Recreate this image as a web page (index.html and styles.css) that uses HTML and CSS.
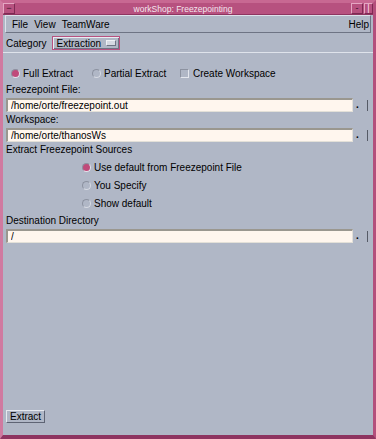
FILE: index.html
```html
<!DOCTYPE html>
<html lang="en">
<head>
  <meta charset="UTF-8">
  <title>workShop: Freezepointing</title>
  <link rel="stylesheet" href="styles.css">
</head>
<body>

  <div class="window">
    <div class="titlebar">
      <span class="wm-btn wm-menu">&minus;</span>
      <span class="title">workShop: Freezepointing</span>
      <span class="wm-btn wm-min">-</span>
      <span class="wm-btn wm-max">|</span>
    </div>

    <div class="client">
      <div class="menubar">
        <span>File</span>
        <span>View</span>
        <span>TeamWare</span>
        <span class="help">Help</span>
      </div>

      <div class="category-row">
        <span>Category</span>
        <span class="option-btn">Extraction <i class="option-mark"></i></span>
      </div>

      <div class="panel">
        <div class="mode-row">
          <label class="radio"><i class="dot on"></i>Full Extract</label>
          <label class="radio"><i class="dot"></i>Partial Extract</label>
          <label class="check"><i class="box"></i>Create Workspace</label>
        </div>

        <div class="field-label">Freezepoint File:</div>
        <div class="field">
          <input class="text-input" type="text" value="/home/orte/freezepoint.out">
          <span class="dot-mark">.</span>
          <span class="bar-mark"></span>
        </div>

        <div class="field-label">Workspace:</div>
        <div class="field">
          <input class="text-input" type="text" value="/home/orte/thanosWs">
          <span class="dot-mark">.</span>
          <span class="bar-mark"></span>
        </div>

        <div class="field-label">Extract Freezepoint Sources</div>
        <div class="source-list">
          <label class="radio"><i class="dot on"></i>Use default from Freezepoint File</label>
          <label class="radio"><i class="dot"></i>You Specify</label>
          <label class="radio"><i class="dot"></i>Show default</label>
        </div>

        <div class="field-label">Destination Directory</div>
        <div class="field">
          <input class="text-input" type="text" value="/">
          <span class="dot-mark">.</span>
          <span class="bar-mark"></span>
        </div>

        <div class="footer">
          <button class="push-btn">Extract</button>
        </div>
      </div>
    </div>
  </div>

</body>
</html>
```

FILE: styles.css
```css
body {
  margin: 0;
  font-family: "Liberation Sans", Arial, sans-serif;
  font-size: 10px;
  color: #000;
  background: #b0b7c6;
}

.window {
  width: 376px;
  height: 439px;
  box-sizing: border-box;
  border: 3px solid #b44f7c;
  border-left-color: #d07aa0;
  border-top-color: #c86892;
  border-bottom: 4px solid #8e3460;
  display: flex;
  flex-direction: column;
  background: #b0b7c6;
}

/* title bar */
.titlebar {
  height: 11px;
  background: #b7517f;
  display: flex;
  align-items: center;
  color: #fff;
  border-bottom: 1px solid #8e3460;
}

.title {
  flex: 1;
  text-align: center;
  font-size: 8.5px;
  color: #f4e6ee;
}

.wm-btn {
  width: 12px;
  height: 11px;
  box-sizing: border-box;
  border: 1px solid #e5a6c2;
  border-right-color: #7e2a53;
  border-bottom-color: #7e2a53;
  display: flex;
  align-items: center;
  justify-content: center;
  font-size: 9px;
  line-height: 1;
  color: #fff;
}

.wm-menu {
  color: #3b1328;
}

.wm-min {
  color: #3b1328;
  margin-right: 1px;
}

.wm-max {
  width: 9px;
  color: #ffe0ee;
}

/* client area */
.client {
  flex: 1;
  display: flex;
  flex-direction: column;
}

.menubar {
  height: 18px;
  box-sizing: border-box;
  margin: 0 2px;
  border: 1px solid #dde1ea;
  border-right-color: #6e7484;
  border-bottom-color: #6e7484;
  display: flex;
  align-items: center;
  gap: 6px;
  padding: 1px 1px 0 6px;
}

.menubar .help {
  margin-left: auto;
}

.category-row {
  height: 18px;
  display: flex;
  align-items: center;
  gap: 5px;
  padding: 1px 3px 0 3px;
  border-bottom: 1px solid #dfe3eb;
}

.option-btn {
  display: flex;
  align-items: center;
  gap: 5px;
  height: 12px;
  padding: 0 3px 0 4px;
  border: 1px solid #b7517f;
  box-shadow: inset 1px 1px 0 #e9ecf2, inset -1px -1px 0 #6e7484;
}

.option-mark {
  width: 8px;
  height: 4px;
  background: #d5d9e2;
  border: 1px solid #eef0f5;
  border-right-color: #6e7484;
  border-bottom-color: #6e7484;
}

/* main panel */
.panel {
  flex: 1;
  display: flex;
  flex-direction: column;
  padding: 13px 3px 12px 3px;
}

.mode-row {
  display: flex;
  align-items: center;
  height: 14px;
  padding-left: 5px;
  margin-bottom: 4px;
}

.mode-row .radio:nth-child(1) {
  width: 81px;
}

.mode-row .radio:nth-child(2) {
  width: 88px;
}

.radio,
.check {
  display: flex;
  align-items: center;
  gap: 3px;
}

.dot {
  width: 7px;
  height: 7px;
  border-radius: 50%;
  border: 1px solid #d6dae3;
  border-top-color: #8c92a0;
  border-left-color: #8c92a0;
}

.dot.on {
  background: #c04a7a;
  border-color: #8c92a0 #e4e7ee #e4e7ee #8c92a0;
}

.box {
  width: 7px;
  height: 7px;
  border: 1px solid #e4e7ee;
  border-top-color: #8c92a0;
  border-left-color: #8c92a0;
  margin-right: 1px;
}

.field-label {
  height: 12px;
  line-height: 12px;
  margin-bottom: 2px;
}

.field {
  display: flex;
  align-items: center;
  height: 14px;
  margin-bottom: 2px;
}

.text-input {
  width: 347px;
  height: 14px;
  box-sizing: border-box;
  margin: 0;
  padding: 0 3px;
  border: 1px solid #e3e0d8;
  border-top: 2px solid #9a978f;
  border-left: 2px solid #9a978f;
  background: #fff6ee;
  font-family: "Liberation Sans", Arial, sans-serif;
  font-size: 10px;
  color: #000;
  outline: none;
}

.dot-mark {
  width: 6px;
  margin-left: 3px;
  font-weight: bold;
  line-height: 10px;
}

.bar-mark {
  width: 1px;
  height: 11px;
  margin-left: 5px;
  background: #555a66;
}

.source-list {
  display: flex;
  flex-direction: column;
  gap: 4px;
  padding: 2px 0 5px 76px;
}

.source-list .radio {
  height: 14px;
}

.footer {
  margin-top: auto;
}

.push-btn {
  font-family: "Liberation Sans", Arial, sans-serif;
  font-size: 10px;
  color: #000;
  height: 13px;
  padding: 0 3px;
  background: #b0b7c6;
  border: 1px solid #e6e9ef;
  border-right-color: #5e6474;
  border-bottom-color: #5e6474;
  line-height: 10px;
}
```
